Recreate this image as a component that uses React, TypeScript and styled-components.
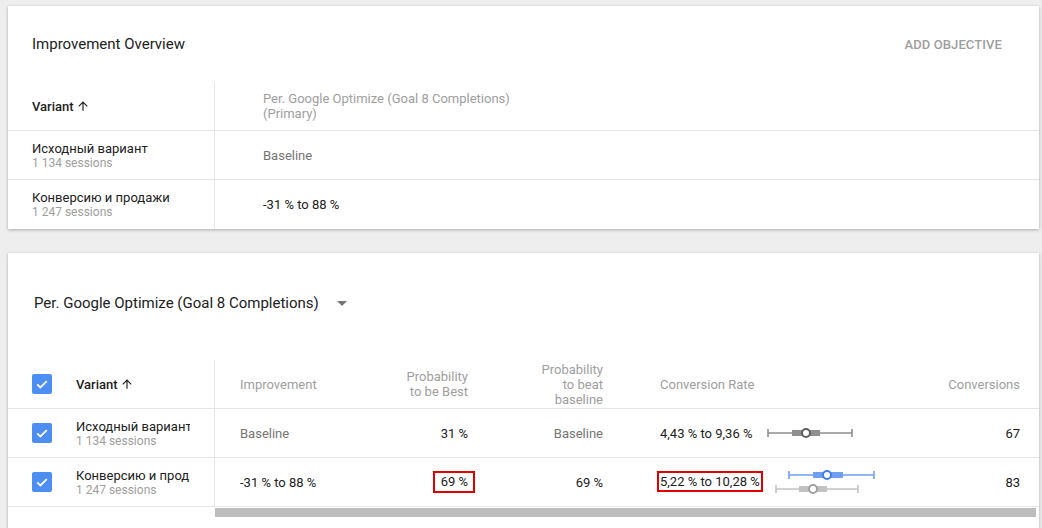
import React from "react";
import styled, { createGlobalStyle } from "styled-components";

const Global = createGlobalStyle`
  html, body { margin: 0; padding: 0; background: #eeeeee; overflow: hidden; }
  body { font-family: Roboto, "Noto Sans", Arial, sans-serif; color: #212121; }
  * { box-sizing: border-box; }
`;

const Page = styled.div`
  display: flex;
  flex-direction: column;
  gap: 24px;
  padding: 6px 3px 0 8px;
`;

const Card = styled.section<{ $tall?: boolean }>`
  background: #fff;
  box-shadow: 0 1px 3px rgba(0, 0, 0, 0.28);
  height: ${(p) => (p.$tall ? "300px" : "223px")};
`;

const OverviewHeader = styled.div`
  height: 76px;
  display: flex;
  align-items: center;
  justify-content: space-between;
  padding: 0 37px 0 24px;
`;

const CardTitle = styled.h2`
  margin: 0;
  font-size: 15px;
  font-weight: 400;
  color: #212121;
`;

const TextButton = styled.button`
  border: 0;
  background: none;
  padding: 0;
  font-family: inherit;
  font-size: 13px;
  font-weight: 500;
  color: #9e9e9e;
  text-transform: uppercase;
  letter-spacing: 0.1px;
`;

const OverviewRow = styled.div<{ $last?: boolean }>`
  display: grid;
  grid-template-columns: 207px 1fr;
  height: 49px;
  border-bottom: ${(p) => (p.$last ? "0" : "1px solid #e6e6e6")};
`;

const Cell = styled.div<{ $align?: "left" | "right"; $pl?: number; $pr?: number; $divider?: boolean }>`
  display: flex;
  align-items: center;
  justify-content: ${(p) => (p.$align === "right" ? "flex-end" : "flex-start")};
  text-align: ${(p) => (p.$align === "right" ? "right" : "left")};
  padding-left: ${(p) => p.$pl ?? 0}px;
  padding-right: ${(p) => p.$pr ?? 0}px;
  border-right: ${(p) => (p.$divider ? "1px solid #e6e6e6" : "0")};
  font-size: 13px;
  line-height: 15px;
  min-width: 0;
`;

const HeadLabel = styled.span<{ $dark?: boolean }>`
  font-size: 13px;
  line-height: 15px;
  color: ${(p) => (p.$dark ? "#212121" : "#9e9e9e")};
  font-weight: ${(p) => (p.$dark ? 500 : 400)};
  display: inline-flex;
  align-items: center;
  gap: 2px;
`;

const Value = styled.span<{ $muted?: boolean }>`
  font-size: 13px;
  color: ${(p) => (p.$muted ? "#757575" : "#212121")};
  white-space: nowrap;
`;

const NameBlock = styled.div`
  display: flex;
  flex-direction: column;
  overflow: hidden;
  white-space: nowrap;
`;

const Name = styled.span`
  font-size: 13px;
  line-height: 15px;
  color: #212121;
`;

const Sessions = styled.span`
  font-size: 12px;
  line-height: 14px;
  color: #9e9e9e;
`;

const MetricSelect = styled.div`
  height: 107px;
  display: flex;
  align-items: flex-start;
  gap: 18px;
  padding: 38px 0 0 26px;
`;

const MetricTitle = styled.span`
  font-size: 15px;
  line-height: 24px;
  color: #212121;
`;

const Caret = styled.span`
  margin-top: 10px;
  width: 0;
  height: 0;
  border-left: 5px solid transparent;
  border-right: 5px solid transparent;
  border-top: 5px solid #757575;
`;

const GridRow = styled.div<{ $h: number }>`
  display: grid;
  grid-template-columns: 207px 165px 112px 135px 290px 122px;
  height: ${(p) => p.$h}px;
  border-bottom: 1px solid #e6e6e6;
`;

const VariantCell = styled.div`
  display: flex;
  align-items: center;
  gap: 24px;
  padding: 0 24px;
  border-right: 1px solid #e6e6e6;
  min-width: 0;
  overflow: hidden;
`;

const CheckBox = styled.span`
  flex: none;
  width: 20px;
  height: 20px;
  border-radius: 2px;
  background: #4d8ef2;
  display: inline-flex;
  align-items: center;
  justify-content: center;
`;

const Highlight = styled.span<{ $pad: string; $shift: string }>`
  border: 2px solid #e00000;
  padding: ${(p) => p.$pad};
  margin: ${(p) => p.$shift};
  line-height: 16px;
`;

const ConvCell = styled.div`
  display: flex;
  align-items: center;
  padding-left: 33px;
`;

const ConvText = styled.div`
  width: 106px;
  flex: none;
  font-size: 13px;
  white-space: nowrap;
  color: #212121;
`;

const Scrollbar = styled.div`
  height: 9px;
  margin: 1px 3px 0 207px;
  background: #bdbdbd;
`;

const ArrowUp = () => (
  <svg width="14" height="14" viewBox="0 0 24 24" aria-hidden>
    <path fill="#212121" d="M4 12l1.41 1.41L11 7.83V20h2V7.83l5.58 5.59L20 12l-8-8-8 8z" />
  </svg>
);

const Check = () => (
  <CheckBox>
    <svg width="20" height="20" viewBox="0 0 20 20" aria-hidden>
      <path d="M5.2 10.3l3.2 3.2 6.4-6.4" fill="none" stroke="#fff" strokeWidth="1.8" />
    </svg>
  </CheckBox>
);

type Interval = { y: number; x1: number; x2: number; b1: number; b2: number; c: number; line: string; ring: string };

const IntervalChart = ({ items }: { items: Interval[] }) => (
  <svg width="114" height="30" viewBox="0 0 114 30" aria-hidden>
    {items.map((it, i) => (
      <g key={i}>
        <line x1={it.x1} x2={it.x2} y1={it.y} y2={it.y} stroke={it.line} strokeWidth="1.6" />
        <line x1={it.x1} x2={it.x1} y1={it.y - 4} y2={it.y + 4} stroke={it.line} strokeWidth="1.6" />
        <line x1={it.x2} x2={it.x2} y1={it.y - 4} y2={it.y + 4} stroke={it.line} strokeWidth="1.6" />
        <rect x={it.b1} y={it.y - 3} width={it.b2 - it.b1} height="6" fill={it.line} />
        <circle cx={it.c} cy={it.y} r="4" fill="#fff" stroke={it.ring} strokeWidth="2" />
      </g>
    ))}
  </svg>
);

export default function App() {
  return (
    <>
      <Global />
      <Page>
        <Card>
          <OverviewHeader>
            <CardTitle>Improvement Overview</CardTitle>
            <TextButton>Add objective</TextButton>
          </OverviewHeader>
          <OverviewRow>
            <Cell $pl={24} $divider>
              <HeadLabel $dark>
                Variant <ArrowUp />
              </HeadLabel>
            </Cell>
            <Cell $pl={48}>
              <HeadLabel>
                Per. Google Optimize (Goal 8 Completions)
                <br />
                (Primary)
              </HeadLabel>
            </Cell>
          </OverviewRow>
          <OverviewRow>
            <Cell $pl={24} $divider>
              <NameBlock>
                <Name>Исходный вариант</Name>
                <Sessions>1 134 sessions</Sessions>
              </NameBlock>
            </Cell>
            <Cell $pl={48}>
              <Value $muted>Baseline</Value>
            </Cell>
          </OverviewRow>
          <OverviewRow $last>
            <Cell $pl={24} $divider>
              <NameBlock>
                <Name>Конверсию и продажи</Name>
                <Sessions>1 247 sessions</Sessions>
              </NameBlock>
            </Cell>
            <Cell $pl={48}>
              <Value>-31 % to 88 %</Value>
            </Cell>
          </OverviewRow>
        </Card>

        <Card $tall>
          <MetricSelect>
            <MetricTitle>Per. Google Optimize (Goal 8 Completions)</MetricTitle>
            <Caret />
          </MetricSelect>

          <GridRow $h={49}>
            <VariantCell>
              <Check />
              <HeadLabel $dark>
                Variant <ArrowUp />
              </HeadLabel>
            </VariantCell>
            <Cell $pl={25}>
              <HeadLabel>Improvement</HeadLabel>
            </Cell>
            <Cell $align="right" $pr={24}>
              <HeadLabel>
                Probability
                <br />
                to be Best
              </HeadLabel>
            </Cell>
            <Cell $align="right" $pr={24}>
              <HeadLabel>
                Probability
                <br />
                to beat
                <br />
                baseline
              </HeadLabel>
            </Cell>
            <Cell $pl={33}>
              <HeadLabel>Conversion Rate</HeadLabel>
            </Cell>
            <Cell $align="right" $pr={19}>
              <HeadLabel>Conversions</HeadLabel>
            </Cell>
          </GridRow>

          <GridRow $h={49}>
            <VariantCell>
              <Check />
              <NameBlock>
                <Name>Исходный вариант</Name>
                <Sessions>1 134 sessions</Sessions>
              </NameBlock>
            </VariantCell>
            <Cell $pl={25}>
              <Value $muted>Baseline</Value>
            </Cell>
            <Cell $align="right" $pr={24}>
              <Value>31 %</Value>
            </Cell>
            <Cell $align="right" $pr={24}>
              <Value $muted>Baseline</Value>
            </Cell>
            <ConvCell>
              <ConvText>4,43 % to 9,36 %</ConvText>
              <IntervalChart
                items={[{ y: 15, x1: 2, x2: 86, b1: 26, b2: 54, c: 40, line: "#8e8e8e", ring: "#5f5f5f" }]}
              />
            </ConvCell>
            <Cell $align="right" $pr={19}>
              <Value>67</Value>
            </Cell>
          </GridRow>

          <GridRow $h={49}>
            <VariantCell>
              <Check />
              <NameBlock>
                <Name>Конверсию и продажи</Name>
                <Sessions>1 247 sessions</Sessions>
              </NameBlock>
            </VariantCell>
            <Cell $pl={25}>
              <Value>-31 % to 88 %</Value>
            </Cell>
            <Cell $align="right" $pr={24}>
              <Highlight $pad="1px 5px 1px 6px" $shift="0 -7px 0 0">
                <Value>69 %</Value>
              </Highlight>
            </Cell>
            <Cell $align="right" $pr={24}>
              <Value>69 %</Value>
            </Cell>
            <ConvCell>
              <ConvText>
                <Highlight $pad="1px 1px 1px 1px" $shift="0 0 0 -3px">
                  5,22 % to 10,28 %
                </Highlight>
              </ConvText>
              <IntervalChart
                items={[
                  { y: 8, x1: 23, x2: 108, b1: 47, b2: 77, c: 61, line: "#6f9ff0", ring: "#3f7ee8" },
                  { y: 22, x1: 10, x2: 92, b1: 33, b2: 61, c: 47, line: "#c2c2c2", ring: "#a0a0a0" },
                ]}
              />
            </ConvCell>
            <Cell $align="right" $pr={19}>
              <Value>83</Value>
            </Cell>
          </GridRow>
          <Scrollbar />
        </Card>
      </Page>
    </>
  );
}
